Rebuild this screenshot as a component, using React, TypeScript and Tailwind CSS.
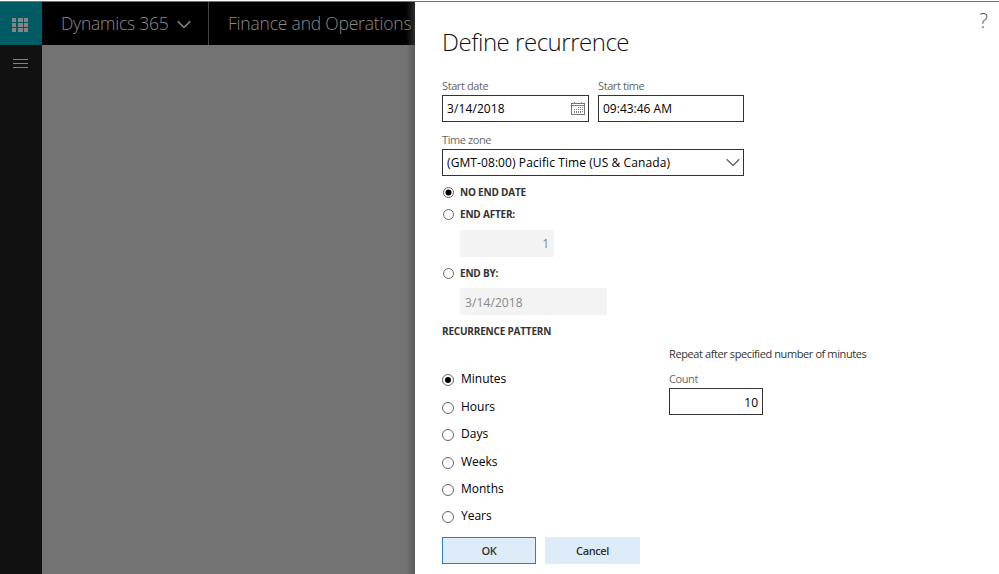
import React from "react";

const patterns = ["Minutes", "Hours", "Days", "Weeks", "Months", "Years"];

function Radio({ checked = false, large = false }: { checked?: boolean; large?: boolean }) {
  return (
    <span
      className={`flex shrink-0 items-center justify-center rounded-full border border-[#666] bg-white ${
        large ? "h-[12px] w-[12px]" : "h-[11px] w-[11px]"
      }`}
    >
      {checked && <span className={`rounded-full bg-black ${large ? "h-[6px] w-[6px]" : "h-[5px] w-[5px] ring-[0.5px] ring-black"}`} />}
    </span>
  );
}

function Chevron({ className }: { className: string }) {
  return (
    <svg className={className} viewBox="0 0 14 9" fill="none" stroke="currentColor" strokeWidth="1.4">
      <path d="M0.7 1.2 7 7.5 13.3 1.2" />
    </svg>
  );
}

function CalendarIcon() {
  return (
    <svg className="mb-px h-[14px] w-[14px]" viewBox="0 0 14 14" fill="none" stroke="#777" shapeRendering="crispEdges">
      <path d="M.5 2.5h13v11H.5z" />
      <path d="M1 4.5h12M3.5 1v2M10.5 1v2" stroke="#888" />
      <path d="M7 6.5h5M3 8.5h9M3 10.5h9M3 11.5h7" strokeDasharray="1 1" />
    </svg>
  );
}

export default function App() {
  return (
    <div className="flex h-[574px] w-[999px] flex-col overflow-hidden bg-white font-['Open_Sans','Noto_Sans',sans-serif] text-black">
      <div className="mt-px h-px shrink-0 bg-[#737373]" />
      <div className="flex h-[572px]">
        <div className="relative flex w-[415px] shrink-0 flex-col overflow-hidden bg-[#737373]">
          <header className="flex h-[43px] shrink-0 bg-black text-[#8a8a8a]">
            <div className="flex w-[42px] shrink-0 items-center justify-center bg-[#005b62]">
              <div className="mt-[3px] mr-px grid grid-cols-3 gap-px">
                {Array.from({ length: 9 }, (_, i) => (
                  <span key={i} className={i % 3 === 1 ? "h-[4px] w-[5px] bg-[#858585]" : "h-[4px] w-[4px] bg-[#858585]"} />
                ))}
              </div>
            </div>
            <div className="flex w-[166px] shrink-0 items-center pl-[19px]">
              <span className="w-[116px] text-[17.5px] font-light tracking-[-0.25px] whitespace-nowrap">Dynamics 365</span>
              <Chevron className="mt-[1px] h-[9px] w-[14px]" />
            </div>
            <div className="flex items-center border-l border-[#444] pl-[19px]">
              <span className="text-[17.5px] font-light tracking-[-0.2px] whitespace-nowrap">Finance and Operations</span>
            </div>
          </header>
          <nav className="flex w-[42px] flex-1 flex-col items-center gap-[3px] bg-[#111] pt-[14px] pr-px">
            <span className="h-px w-[15px] bg-[#828282]" />
            <span className="h-px w-[15px] bg-[#828282]" />
            <span className="h-px w-[15px] bg-[#828282]" />
          </nav>
          <div className="absolute top-0 right-0 h-full w-[9px] bg-linear-to-r from-[#4a4a4a]/0 to-[#4a4a4a]/60" />
        </div>

        <main className="flex w-[584px] flex-col pl-[27px]">
          <div className="flex h-[74px] justify-between pr-[11px]">
            <h1 className="mt-[23px] text-[24px] leading-[34px] font-light tracking-[-0.47px] text-[#111]">Define recurrence</h1>
            <span className="mt-[7px] text-[20px] leading-[24px] font-light text-[#555]">?</span>
          </div>

          <div className="flex h-[54px] gap-[9px]">
            <label className="w-[147px] text-[11px] leading-[19px] text-[#666]">
              <span className="block h-[19px] tracking-[-0.4px]">Start date</span>
              <span className="flex h-[27px] items-center justify-between border border-[#333] pr-[3px] pl-[4px] text-[12px] text-black">
                <span className="tracking-[0.1px]">3/14/2018</span>
                <CalendarIcon />
              </span>
            </label>
            <label className="w-[146px] text-[11px] leading-[19px] text-[#666]">
              <span className="block h-[19px] tracking-[-0.4px]">Start time</span>
              <span className="flex h-[27px] items-center border border-[#333] pl-[4px] text-[12px] tracking-[0px] text-black">09:43:46 AM</span>
            </label>
          </div>

          <label className="h-[54px] w-[302px] text-[11px] leading-[19px] text-[#666]">
            <span className="block h-[19px] tracking-[-0.4px]">Time zone</span>
            <span className="flex h-[27px] items-center justify-between border border-[#333] pr-[3px] pl-[4px] text-[12px]">
              <span className="tracking-[0.09px] text-black">(GMT-08:00) Pacific Time (US &amp; Canada)</span>
              <Chevron className="h-[9px] w-[14px]" />
            </span>
          </label>

          <section className="flex flex-col pl-px text-[10px] font-bold text-[#333]">
            <div className="flex h-[17px] items-center gap-[6px]"><Radio checked /><span className="tracking-[-0.2px]">NO END DATE</span></div>
            <div className="mt-[5px] flex h-[17px] items-center gap-[6px]"><Radio /><span className="tracking-[-0.2px]">END AFTER:</span></div>
            <div className="mt-[7px] ml-[17px] flex h-[27px] w-[94px] items-center justify-end bg-[#f3f3f3] pr-[5px] text-[12px] font-normal text-[#888]">1</div>
            <div className="mt-[8px] flex h-[17px] items-center gap-[6px]"><Radio /><span className="tracking-[-0.2px]">END BY:</span></div>
            <div className="mt-[6px] ml-[17px] flex h-[27px] w-[147px] items-center bg-[#f3f3f3] pt-[2px] pl-[5px] text-[12px] font-normal tracking-[0.1px] text-[#888]">3/14/2018</div>
          </section>

          <h2 className="mt-[8px] h-[16px] text-[10px] leading-[16px] font-bold tracking-[-0.2px] text-[#333]">RECURRENCE PATTERN</h2>

          <div className="flex h-[198px]">
            <div className="flex w-[227px] flex-col pt-[26.7px]">
              {patterns.map((name, i) => (
                <div key={name} className="flex h-[27.4px] shrink-0 items-center gap-[7px]">
                  <span className="mt-[2px]"><Radio large checked={i === 0} /></span>
                  <span className="text-[12px] leading-[18px]">{name}</span>
                </div>
              ))}
            </div>
            <div className="flex flex-col pt-[6px]">
              <p className="h-[17px] text-[11px] leading-[17px] tracking-[-0.4px] whitespace-nowrap text-[#333]">Repeat after specified number of minutes</p>
              <span className="mt-[8px] h-[18px] text-[11px] leading-[17px] tracking-[-0.4px] text-[#666]">Count</span>
              <div className="flex h-[27px] w-[94px] items-center justify-end border border-[#333] pt-[2px] pr-[4px] text-[12px]">10</div>
            </div>
          </div>

          <div className="flex gap-[9px] text-[11px] font-semibold text-[#333]">
            <button className="h-[27px] w-[94px] border border-[#2e7fc1] bg-[#deecf9] pt-[2px] tracking-[-0.4px]">OK</button>
            <button className="h-[27px] w-[95px] bg-[#deecf9] pt-[2px] tracking-[-0.4px]">Cancel</button>
          </div>
        </main>
      </div>
    </div>
  );
}
